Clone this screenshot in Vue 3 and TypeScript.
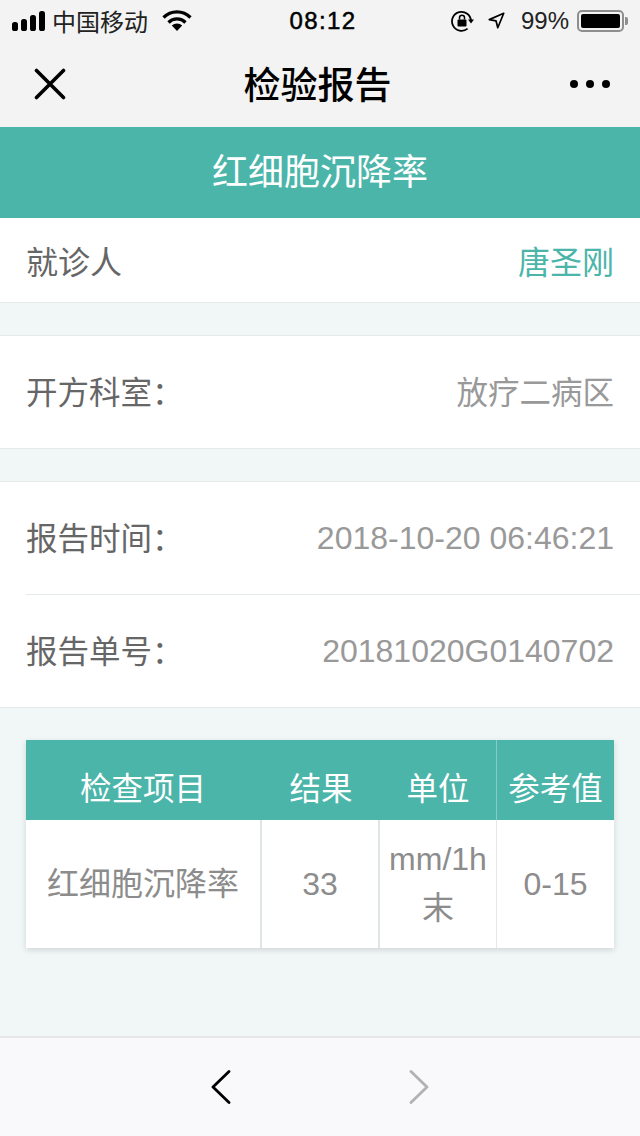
<script setup lang="ts">
const headers = [
  { label: '检查项目', cls: 'c1' },
  { label: '结果', cls: 'c2' },
  { label: '单位', cls: 'c3' },
  { label: '参考值', cls: 'c4' },
]
</script>

<template>
  <div class="page">
    <header class="topbar">
      <div class="status">
        <div class="status-left">
          <svg class="signal" width="33" height="20" viewBox="0 0 33 20">
            <rect x="0" y="11" width="6" height="9" rx="2.6" fill="#000" />
            <rect x="9" y="8" width="6" height="12" rx="2.6" fill="#000" />
            <rect x="18" y="4" width="6" height="16" rx="2.6" fill="#000" />
            <rect x="27" y="0" width="6" height="20" rx="2.6" fill="#000" />
          </svg>
          <span class="carrier">中国移动</span>
          <svg class="wifi" width="30" height="22" viewBox="0 0 30 22">
            <path d="M1.5 7.5 A19 19 0 0 1 28.5 7.5" fill="none" stroke="#000" stroke-width="3.2" />
            <path d="M6.5 12.5 A12 12 0 0 1 23.5 12.5" fill="none" stroke="#000" stroke-width="3.2" />
            <path d="M15 21 L9.8 15.6 A7.6 7.6 0 0 1 20.2 15.6 Z" fill="#000" />
          </svg>
        </div>
        <span class="clock">08:12</span>
        <div class="status-right">
          <svg width="24" height="24" viewBox="0 0 24 24">
            <path d="M21 12 A9.5 9.5 0 1 0 17.6 19.6" fill="none" stroke="#000" stroke-width="1.8" />
            <path d="M18 10.5 L24 10.5 L21 14.5 Z" fill="#000" />
            <rect x="7.5" y="10.5" width="9" height="7" rx="1" fill="#000" />
            <path d="M9.5 10.5 V8.8 A2.5 2.5 0 0 1 14.5 8.8 V10.5" fill="none" stroke="#000" stroke-width="1.5" />
          </svg>
          <svg class="arrow" width="17" height="17" viewBox="0 0 20 20">
            <path d="M18.5 1.5 L1.5 9 L9.5 10.5 L11.5 18.5 Z" fill="none" stroke="#000" stroke-width="2" stroke-linejoin="round" />
          </svg>
          <span class="pct">99%</span>
          <div class="battery">
            <div class="battery-body"><div class="battery-fill"></div></div>
            <div class="battery-cap"></div>
          </div>
        </div>
      </div>
      <div class="navbar">
        <svg class="close" width="32" height="32" viewBox="0 0 32 32">
          <path d="M2.5 2.5 L29.5 29.5 M29.5 2.5 L2.5 29.5" stroke="#000" stroke-width="3.6" stroke-linecap="round" />
        </svg>
        <h1 class="nav-title">检验报告</h1>
        <div class="dots"><i></i><i></i><i></i></div>
      </div>
    </header>

    <div class="banner">红细胞沉降率</div>

    <section class="group first">
      <div class="row patient">
        <span class="key">就诊人</span>
        <span class="patient-name">唐圣刚</span>
      </div>
    </section>

    <section class="group">
      <div class="row tall">
        <span class="key raised">开方科室：</span>
        <span class="val raised">放疗二病区</span>
      </div>
    </section>

    <section class="group">
      <div class="row tall divided">
        <span class="key raised">报告时间：</span>
        <span class="val">2018-10-20 06:46:21</span>
      </div>
      <div class="row tall">
        <span class="key raised">报告单号：</span>
        <span class="val">20181020G0140702</span>
      </div>
    </section>

    <div class="table">
      <div class="thead">
        <div v-for="h in headers" :key="h.label" :class="['th', h.cls]">{{ h.label }}</div>
      </div>
      <div class="tbody">
        <div class="td c1">红细胞沉降率</div>
        <div class="td c2">33</div>
        <div class="td c3">mm/1h<br />末</div>
        <div class="td c4">0-15</div>
      </div>
    </div>

    <footer class="toolbar">
      <svg width="20" height="34" viewBox="0 0 20 34">
        <path d="M18 1.5 L2 17 L18 32.5" fill="none" stroke="#000" stroke-width="2.8" stroke-linecap="round" stroke-linejoin="round" />
      </svg>
      <svg width="20" height="34" viewBox="0 0 20 34">
        <path d="M2 1.5 L18 17 L2 32.5" fill="none" stroke="#b2b2b2" stroke-width="2.8" stroke-linecap="round" stroke-linejoin="round" />
      </svg>
    </footer>
  </div>
</template>

<style>
html, body { margin: 0; padding: 0; background: #f1f6f6; }
</style>

<style scoped>
.page {
  width: 640px;
  height: 1136px;
  display: flex;
  flex-direction: column;
  background: #f1f6f6;
  font-family: "Liberation Sans", "Noto Sans CJK SC", sans-serif;
  overflow: hidden;
}
.topbar { height: 127px; background: #f3f3f3; flex: none; }
.status {
  height: 41px;
  display: grid;
  grid-template-columns: 1fr auto 1fr;
  align-items: center;
  padding: 0 12px;
  font-size: 24px;
  color: #000;
}
.status-left { display: flex; align-items: center; gap: 7px; }
.carrier { color: #222; }
.wifi { margin-left: 7px; }
.clock { letter-spacing: 1.4px; -webkit-text-stroke: 0.5px #000; padding-left: 6px; }
.status-right { display: flex; align-items: center; justify-content: flex-end; gap: 8px; }
.arrow { margin-left: 6px; }
.pct { margin-left: 8px; color: #222; }
.battery { display: flex; align-items: center; }
.battery-body {
  width: 47px;
  height: 22px;
  box-sizing: border-box;
  border: 2px solid #8e8e8e;
  border-radius: 5px;
  padding: 2px;
}
.battery-fill { height: 100%; background: #000; border-radius: 2px; }
.battery-cap { width: 3px; height: 8px; background: #8e8e8e; border-radius: 0 2px 2px 0; margin-left: 1px; }
.navbar {
  height: 86px;
  display: grid;
  grid-template-columns: 1fr auto 1fr;
  align-items: center;
  padding: 0 30px 0 34px;
}
.nav-title {
  margin: 0 9px 2px 0;
  font-size: 37px;
  font-weight: 500;
  color: #000;
  text-align: center;
}
.dots { display: flex; gap: 8px; justify-self: end; }
.dots i { width: 8px; height: 8px; border-radius: 50%; background: #000; display: block; }
.banner {
  flex: none;
  height: 91px;
  background: #4bb5aa;
  color: #fff;
  font-size: 36px;
  line-height: 91px;
  text-align: center;
}
.group {
  flex: none;
  background: #fff;
  border-top: 1px solid #e4eaea;
  border-bottom: 1px solid #e4eaea;
  margin-top: 32px;
  padding-left: 26px;
}
.group.first { margin-top: 0; border-top: none; }
.row {
  display: flex;
  justify-content: space-between;
  align-items: center;
  padding-right: 26px;
}
.patient { height: 84px; }
.tall { height: 112px; }
.divided { border-bottom: 1px solid #e4eaea; }
.key { font-size: 32px; color: #666; }
.val { font-size: 32px; color: #999; }
.key.raised, .val.raised { font-size: 31.5px; padding-bottom: 4px; }
.patient-name { font-size: 32px; color: #4bb5aa; }
.table {
  flex: none;
  margin: 32px 26px 0;
  background: #fff;
  box-shadow: 0 2px 6px rgba(0, 0, 0, 0.14);
}
.thead { display: flex; height: 80px; background: #4bb5aa; }
.th {
  color: #fff;
  font-size: 31.5px;
  padding-top: 12px;
  display: flex;
  align-items: center;
  justify-content: center;
  box-sizing: border-box;
}
.th.c1 { padding-right: 2px; }
.th.c4 { border-left: 1px solid #85cdc5; }
.tbody { display: flex; height: 128px; }
.td {
  color: #8c8c8c;
  font-size: 32px;
  display: flex;
  align-items: center;
  justify-content: center;
  text-align: center;
  box-sizing: border-box;
  line-height: 49px;
}
.td.c1, .td.c2 { border-right: 2px solid #dfe4e4; }
.td.c3 { border-right: 1px solid #e4e8e8; }
.c1 { width: 236px; }
.c2 { width: 118px; }
.td.c3 { width: 117px; }
.th.c3 { width: 116px; }
.c4 { flex: 1; }
.toolbar {
  flex: none;
  margin-top: auto;
  height: 98px;
  background: #f9f9fb;
  border-top: 2px solid #e6e6e6;
  display: flex;
  align-items: center;
  justify-content: center;
  gap: 178px;
}
</style>
